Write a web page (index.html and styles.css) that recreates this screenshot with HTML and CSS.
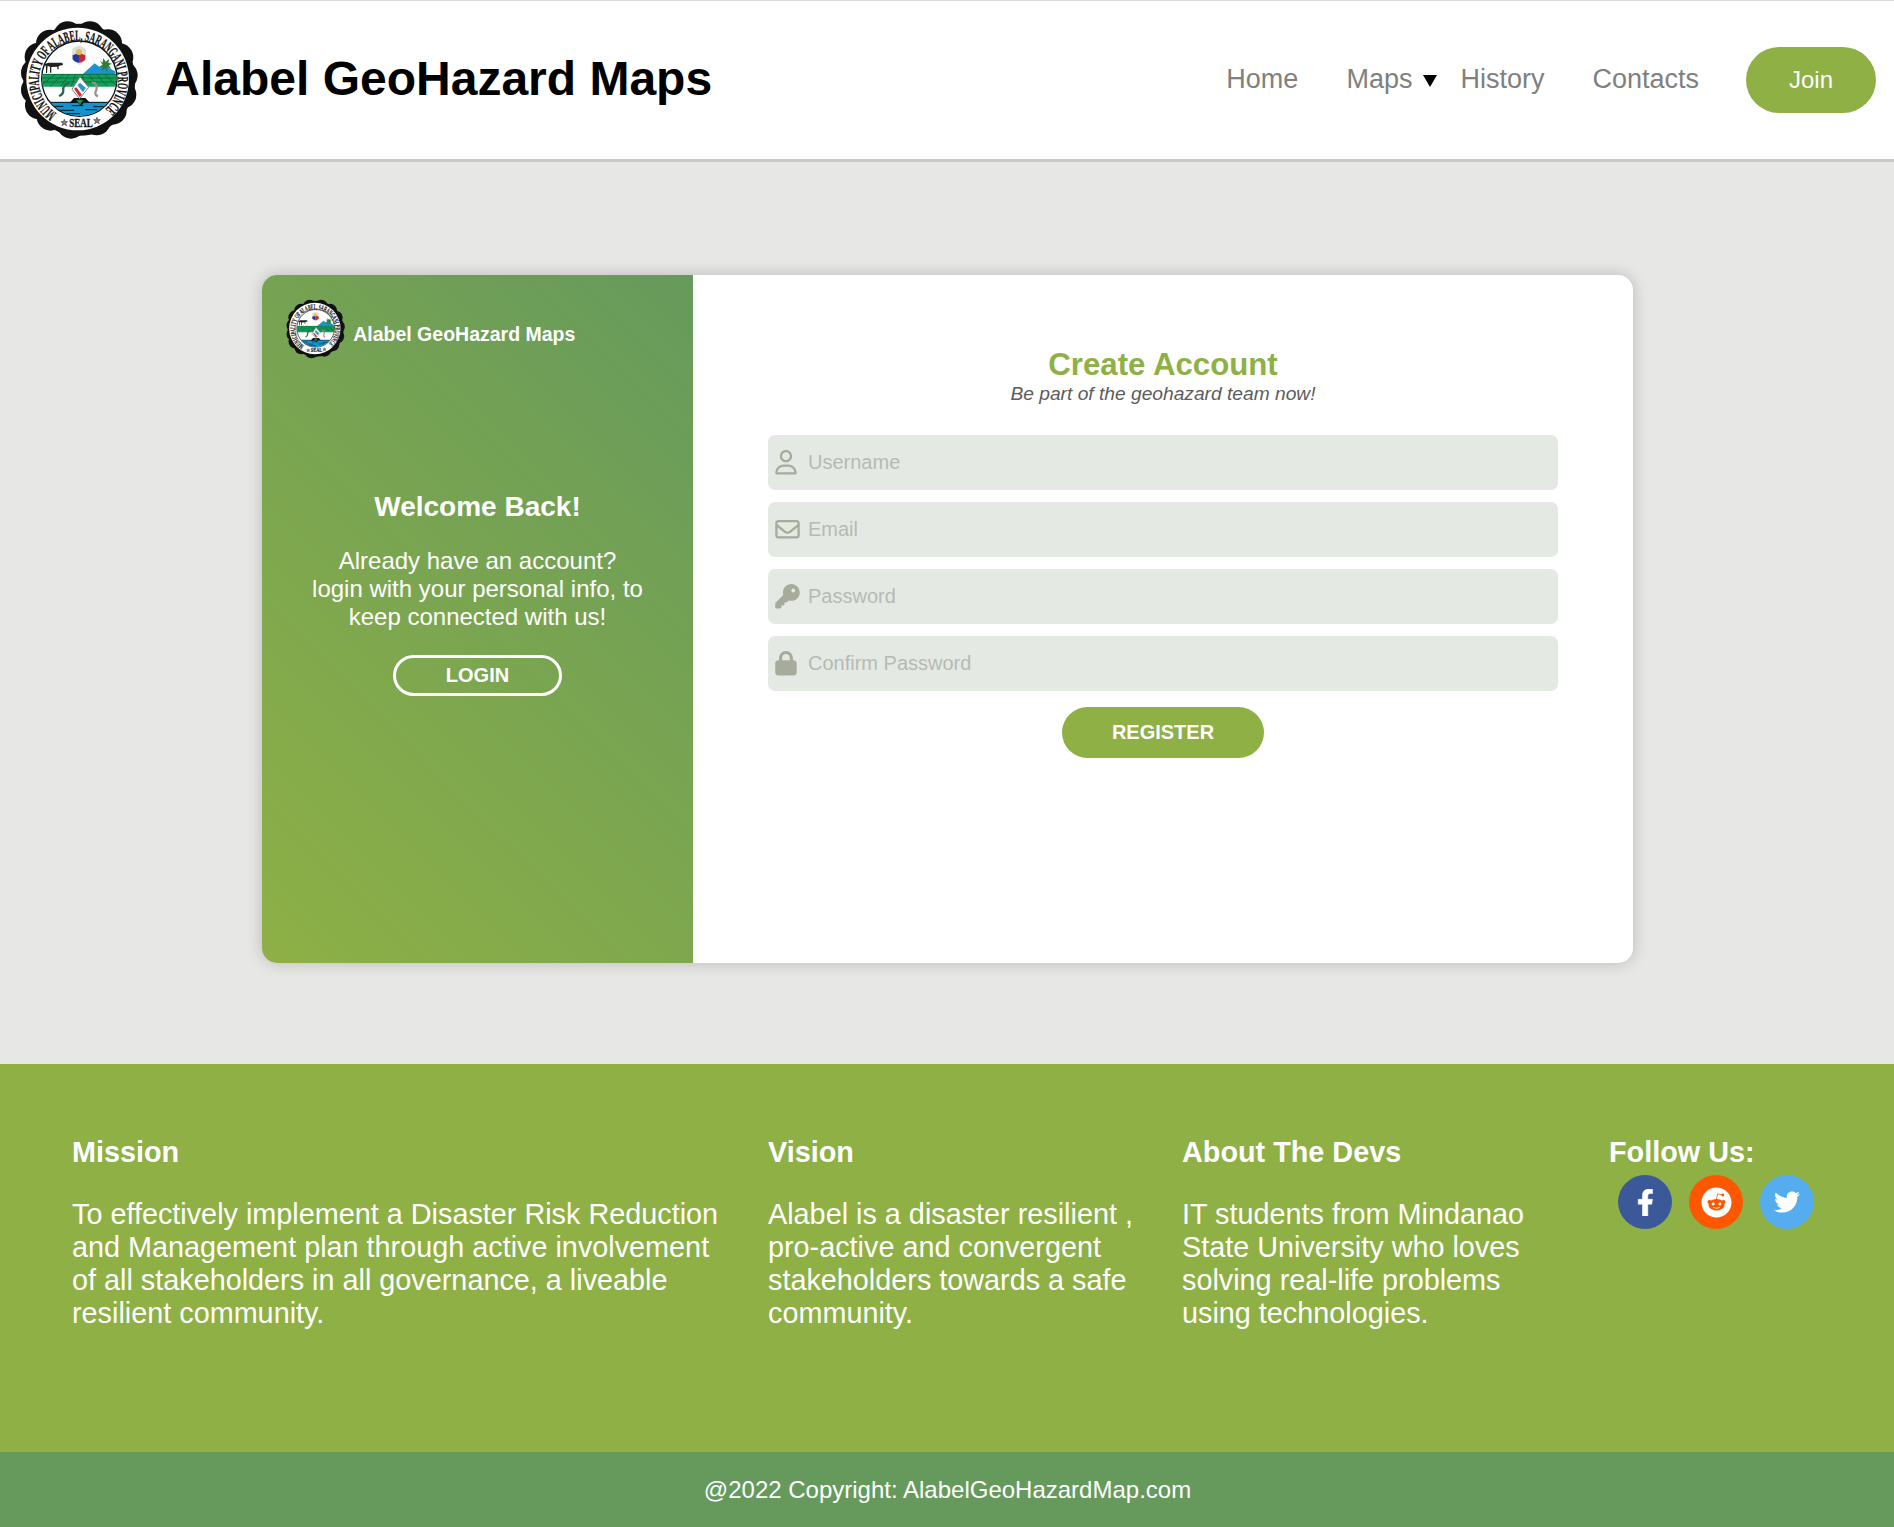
FILE: index.html
```html
<!DOCTYPE html>
<html lang="en">
<head>
<meta charset="utf-8">
<title>Alabel GeoHazard Maps</title>
<link rel="stylesheet" href="styles.css">
</head>
<body>
<svg class="sprite" aria-hidden="true">
  <defs>
    <path id="ring" d="M170 342A119 119 0 1 1 315 331"/>
    <clipPath id="scene"><circle cx="238" cy="238" r="112"/></clipPath>
    <symbol id="seal" viewBox="60 62 358 360">
      <g fill="#111">
        <circle cx="238" cy="241" r="168"/>
        <g id="lobes">
          <circle cx="270" cy="108" r="42"/><circle cx="324" cy="132" r="42"/><circle cx="358" cy="174" r="42"/><circle cx="371" cy="228" r="42"/><circle cx="367" cy="286" r="42"/><circle cx="338" cy="334" r="42"/><circle cx="290" cy="366" r="42"/><circle cx="213" cy="376" r="42"/><circle cx="152" cy="352" r="42"/><circle cx="117" cy="318" r="42"/><circle cx="105" cy="272" r="42"/><circle cx="105" cy="220" r="42"/><circle cx="116" cy="172" r="42"/><circle cx="150" cy="133" r="42"/><circle cx="203" cy="108" r="42"/>
        </g>
      </g>
      <circle cx="233" cy="239" r="154" fill="#fff"/>
      <circle cx="238" cy="238" r="113" fill="#fff" stroke="#111" stroke-width="4"/>
      <g clip-path="url(#scene)">
        <path fill="#1b93d2" d="M246 226L284 192L298 202L310 196L345 216V226Z"/>
        <path fill="#2f7d3a" d="M300 184l8 6 2-14 7 11 11-8-3 11 11 3-10 5 8 10-12-4-1 16-6-14-9 10 2-12-10-2 10-5Z"/>
        <path fill="#12a05a" d="M120 224H356V262H120Z"/>
        <path stroke="#0a5b34" stroke-width="2" fill="none" d="M120 225H356M120 236H356M120 248H356M120 261L165 225M150 261L190 225M182 261L208 225M214 261L226 225M256 261L246 225M290 261L268 225M322 261L290 225M352 261L314 225"/>
        <path fill="#1593cf" d="M110 308H366V370H110Z"/>
        <path stroke="#111" stroke-width="3" fill="none" d="M130 309H350M148 321H190M215 319H250M280 322H322M175 333H222M256 331H292M192 343H240"/>
        <path fill="#111" d="M208 312L222 296H256L270 310L254 308L243 320L232 309Z"/>
        <path fill="#16934d" d="M229 301H250L240 316Z"/>
      </g>
      <path fill="#fff" stroke="#777" stroke-width="3" d="M240 232L266 264L239 298L216 270Z"/>
      <path fill="#d92b36" d="M222 268L229 264L246 286L239 293Z"/>
      <path fill="#279bd0" d="M232 258L240 250L258 266L249 279Z"/>
      <path fill="none" stroke="#34624b" stroke-width="7" d="M207 251Q187 258 190 272Q190 286 177 290"/>
      <path fill="none" stroke="#9a918d" stroke-width="7" d="M276 250Q294 250 289 272Q281 286 294 291"/>
      <path fill="#222" d="M134 194L146 190H187L189 197L176 200V210H172V202L154 203V220H150V203L143 199L141 221H138V203Z"/>
      <path fill="#ddd" d="M218 146L239 138L257 148L260 180L238 198L215 180Z"/>
      <path fill="#263a92" d="M218 168L237 160V190Q222 188 218 178Z"/>
      <path fill="#c52b36" d="M237 160L256 168V178Q254 187 237 190Z"/>
      <circle cx="237" cy="158" r="9" fill="#e8bd46"/>
      <g class="seal-text">
        <text class="seal-ring"><textPath href="#ring" textLength="590" lengthAdjust="spacingAndGlyphs">MUNICIPALITY OF ALABEL, SARANGANI PROVINCE</textPath></text>
        <text x="208" y="383" textLength="70" lengthAdjust="spacingAndGlyphs">SEAL</text>
      </g>
      <path id="star" fill="#8a7a80" stroke="#513e46" stroke-width="2" d="M193 360l3 7h7l-6 5 3 7-7-4-7 4 3-7-6-5h7Z"/>
      <use href="#star" x="98" y="-6"/>
    </symbol>
  </defs>
</svg>

<header class="header">
  <a class="brand"><svg class="brand-seal"><use href="#seal"/></svg><h1>Alabel GeoHazard Maps</h1></a>
  <nav class="nav">
    <a>Home</a>
    <a class="nav-maps">Maps<svg class="caret" viewBox="0 0 14 12"><path d="M0 0H14L7 12Z"/></svg></a>
    <a>History</a>
    <a class="nav-contacts">Contacts</a>
    <a class="join">Join</a>
  </nav>
</header>

<main class="main">
  <section class="card">
    <aside class="welcome">
      <div class="card-brand"><svg class="card-seal"><use href="#seal"/></svg><strong>Alabel GeoHazard Maps</strong></div>
      <h2>Welcome Back!</h2>
      <p>Already have an account?<br>login with your personal info, to<br>keep connected with us!</p>
      <a class="login">LOGIN</a>
    </aside>
    <form class="register">
      <h2>Create Account</h2>
      <p class="tagline">Be part of the geohazard team now!</p>
      <label class="field"><svg viewBox="0 0 512 512"><path d="M272 304h-96C78.8 304 0 382.8 0 480c0 17.67 14.33 32 32 32h384c17.67 0 32-14.33 32-32C448 382.8 369.2 304 272 304zM48.99 464C56.89 400.9 110.8 352 176 352h96c65.16 0 119.1 48.95 127 112H48.99zM224 256c70.69 0 128-57.31 128-128c0-70.69-57.31-128-128-128S96 57.31 96 128C96 198.7 153.3 256 224 256zM224 48c44.11 0 80 35.89 80 80c0 44.11-35.89 80-80 80S144 172.1 144 128C144 83.89 179.9 48 224 48z"/></svg><input type="text" placeholder="Username"></label>
      <label class="field"><svg viewBox="0 0 512 512"><path d="M64 112c-8.8 0-16 7.2-16 16v22.1L220.5 291.7c20.7 17 50.4 17 71.1 0L464 150.1V128c0-8.8-7.2-16-16-16H64zM48 212.2V384c0 8.8 7.2 16 16 16H448c8.8 0 16-7.2 16-16V212.2L322 328.8c-38.4 31.5-93.7 31.5-132 0L48 212.2zM0 128C0 92.7 28.7 64 64 64H448c35.3 0 64 28.7 64 64V384c0 35.3-28.7 64-64 64H64c-35.3 0-64-28.7-64-64V128z"/></svg><input type="email" placeholder="Email"></label>
      <label class="field"><svg viewBox="0 0 512 512"><path d="M336 352c97.2 0 176-78.8 176-176S433.2 0 336 0S160 78.8 160 176c0 18.7 2.9 36.8 8.3 53.7L7 391c-4.5 4.5-7 10.6-7 17v80c0 13.3 10.7 24 24 24h80c13.3 0 24-10.7 24-24V448h40c13.3 0 24-10.7 24-24V384h40c6.4 0 12.5-2.5 17-7l33.3-33.3c16.9 5.4 35 8.3 53.7 8.3zM376 96a40 40 0 1 1 0 80 40 40 0 1 1 0-80z"/></svg><input type="password" placeholder="Password"></label>
      <label class="field"><svg viewBox="0 0 512 512"><path d="M144 144v48H304V144c0-44.2-35.8-80-80-80s-80 35.8-80 80zM80 192V144C80 64.5 144.5 0 224 0s144 64.5 144 144v48h16c35.3 0 64 28.7 64 64V448c0 35.3-28.7 64-64 64H64c-35.3 0-64-28.7-64-64V256c0-35.3 28.7-64 64-64H80z"/></svg><input type="password" placeholder="Confirm Password"></label>
      <button class="submit" type="button">REGISTER</button>
    </form>
  </section>
</main>

<footer class="footer">
  <section>
    <h3>Mission</h3>
    <p>To effectively implement a Disaster Risk Reduction<br>and Management plan through active involvement<br>of all stakeholders in all governance, a liveable<br>resilient community.</p>
  </section>
  <section>
    <h3>Vision</h3>
    <p>Alabel is a disaster resilient ,<br>pro-active and convergent<br>stakeholders towards a safe<br>community.</p>
  </section>
  <section>
    <h3>About The Devs</h3>
    <p>IT students from Mindanao<br>State University who loves<br>solving real-life problems<br>using technologies.</p>
  </section>
  <section>
    <h3>Follow Us:</h3>
    <div class="social">
      <a class="facebook"><svg viewBox="0 0 320 512"><path d="M279.14 288l14.22-92.66h-88.91v-60.13c0-25.35 12.42-50.06 52.24-50.06h40.42V6.26S260.43 0 225.36 0c-73.22 0-121.08 44.38-121.08 124.72v70.62H22.89V288h81.39v224h100.17V288z"/></svg></a>
      <a class="reddit"><svg viewBox="0 0 512 512"><path d="M201.5 305.5c-13.8 0-24.9-11.1-24.9-24.6 0-13.8 11.1-24.9 24.9-24.9 13.6 0 24.6 11.1 24.6 24.9 0 13.6-11.1 24.6-24.6 24.6zM504 256c0 137-111 248-248 248S8 393 8 256 119 8 256 8s248 111 248 248zm-132.3-41.2c-9.4 0-17.7 3.9-23.8 10-22.4-15.5-52.6-25.5-86.1-26.6l17.4-78.3 55.4 12.5c0 13.6 11.1 24.6 24.6 24.6 13.8 0 24.9-11.3 24.9-24.9s-11.1-24.9-24.9-24.9c-9.7 0-18 5.8-22.1 13.8l-61.2-13.6c-3-.8-6.1 1.4-6.9 4.4l-19.1 86.4c-33.2 1.4-63.1 11.3-85.5 26.8-6.1-6.4-14.7-10.2-24.1-10.2-34.9 0-46.3 46.9-14.4 62.8-1.1 5-1.7 10.2-1.7 15.5 0 52.6 59.2 95.2 132 95.2 73.1 0 132.3-42.6 132.3-95.2 0-5.3-.6-10.8-1.9-15.8 31.3-16 19.8-62.5-14.9-62.5zM302.8 331c-18.2 18.2-76.1 17.9-93.6 0-2.2-2.2-6.1-2.2-8.3 0-2.5 2.5-2.5 6.4 0 8.6 22.8 22.8 87.3 22.8 110.2 0 2.5-2.2 2.5-6.1 0-8.6-2.2-2.2-6.1-2.2-8.3 0zm7.7-75c-13.6 0-24.6 11.1-24.6 24.9 0 13.6 11.1 24.6 24.6 24.6 13.8 0 24.9-11.1 24.9-24.6 0-13.8-11-24.9-24.9-24.9z"/></svg></a>
      <a class="twitter"><svg viewBox="0 0 512 512"><path d="M459.37 151.716c.325 4.548.325 9.097.325 13.645 0 138.72-105.583 298.558-298.558 298.558-59.452 0-114.68-17.219-161.137-47.106 8.447.974 16.568 1.299 25.34 1.299 49.055 0 94.213-16.568 130.274-44.832-46.132-.975-84.792-31.188-98.112-72.772 6.498.974 12.995 1.624 19.818 1.624 9.421 0 18.843-1.3 27.614-3.573-48.081-9.747-84.143-51.98-84.143-102.985v-1.299c13.969 7.797 30.214 12.67 47.431 13.319-28.264-18.843-46.781-51.005-46.781-87.391 0-19.492 5.197-37.36 14.294-52.954 51.655 63.675 129.3 105.258 216.365 109.807-1.624-7.797-2.599-15.918-2.599-24.04 0-57.828 46.782-104.934 104.934-104.934 30.213 0 57.502 12.67 76.67 33.137 23.715-4.548 46.456-13.32 66.599-25.34-7.798 24.366-24.366 44.833-46.132 57.827 21.117-2.273 41.584-8.122 60.426-16.243-14.292 20.791-32.161 39.308-52.628 54.253z"/></svg></a>
    </div>
  </section>
</footer>
<div class="copyright">@2022 Copyright: AlabelGeoHazardMap.com</div>
</body>
</html>
```
FILE: styles.css
```css
* { box-sizing: border-box; }
body { margin: 0; background: #e7e7e5; font-family: Arial, "Liberation Sans", sans-serif; }
h1, h2, h3, p { margin: 0; }
.sprite { display: block; width: 0; height: 0; }
.seal-text { font: bold 36px "Liberation Serif", serif; fill: #111; stroke: #111; stroke-width: 1px; }
.seal-ring { font-size: 45px; }

.header {
  display: flex; align-items: center; justify-content: space-between;
  height: 162px; padding: 0 18px 0 20px;
  background: #fff; border-top: 1px solid #d9d9d9; border-bottom: 3px solid #c9c9c9;
}
.brand { display: flex; align-items: center; gap: 26px; }
.brand-seal { width: 119.3px; height: 120px; }
.brand h1 { font-size: 48px; line-height: 54px; margin-top: -2px; }
.nav { display: flex; align-items: center; font-size: 27px; line-height: 32px; color: #808080; }
.nav > a { margin: 0 48px 2px 0; }
.nav .nav-maps { display: flex; align-items: center; gap: 11px; margin-right: 23px; }
.caret { width: 14px; height: 12px; margin-top: 3px; fill: #000; }
.nav .nav-contacts { margin-right: 47px; }
.nav .join {
  width: 130px; height: 66px; margin: 0; border-radius: 33px;
  background: #8eb045; color: #fff; font-size: 24px; line-height: 66px; text-align: center;
}

.main { height: 902px; padding-top: 113px; }
.card {
  display: flex; width: 1371px; height: 688px; margin: 0 auto; overflow: hidden;
  border-radius: 15px; background: #fff; box-shadow: 0 0 16px rgba(0, 0, 0, .2);
}
.welcome {
  display: flex; flex-direction: column; align-items: center; width: 431px; padding-left: 1px;
  background: linear-gradient(45deg, #8eb045, #669a5c); color: #fff;
}
.card-brand { display: flex; align-items: center; align-self: flex-start; gap: 8px; margin: 24px 0 0 23px; height: 60px; font-size: 19.5px; }
.card-brand strong { margin-top: 11px; }
.card-seal { width: 59.7px; height: 60px; }
.welcome h2 { margin-top: 132px; font-size: 28px; line-height: 32px; }
.welcome p { margin-top: 24px; font-size: 24px; line-height: 28px; text-align: center; }
.login {
  width: 169px; height: 41px; margin-top: 24px; border: 3px solid #fff; border-radius: 21px;
  font-size: 20px; font-weight: bold; line-height: 34px; text-align: center;
}

.register { display: flex; flex: 1; flex-direction: column; align-items: center; padding: 72px 75px 0; }
.register h2 { padding-left: 1px; font-size: 31.2px; line-height: 36px; color: #8eb045; }
.tagline { margin-bottom: 30px; padding-left: 1px; font-size: 19.2px; font-style: italic; line-height: 22px; color: #5c5c5c; }
.field {
  display: flex; align-items: center; gap: 8.5px; width: 790px; height: 55px; margin-bottom: 12px; padding: 0 7px;
  border-radius: 7px; background: #e4eae3;
}
.field svg { width: 25px; height: 24.5px; fill: #a6ab9c; }
.field input { flex: 1; height: 30px; padding: 0; border: 0; outline: 0; background: none; font: 20px Arial, "Liberation Sans", sans-serif; }
.field input::placeholder { color: #b6bab5; opacity: 1; }
.submit {
  width: 202px; height: 51px; margin-top: 4px; padding: 0 0 0 1px; border: 0; border-radius: 26px;
  background: #8eb045; color: #fff; font: bold 20px Arial, "Liberation Sans", sans-serif;
}

.footer {
  display: grid; grid-template-columns: 696px 414px 427px auto; height: 388px; padding: 72px 0 0 72px;
  background: #8eb045; color: #fff; font-size: 28.8px; line-height: 33px;
}
.footer h3 { font-size: 28.8px; line-height: 33px; }
.footer p { margin-top: 29px; white-space: nowrap; }
.social { display: flex; gap: 17px; margin: 6px 0 0 9px; }
.social a { display: flex; align-items: center; justify-content: center; width: 54px; height: 54px; border-radius: 50%; }
.social svg { height: 27px; fill: #fff; }
.social .facebook svg { stroke: #fff; stroke-width: 10px; }
.facebook { background: #3b5998; }
.reddit { background: #ff5700; }
.social .reddit svg { height: 31px; }
.twitter { background: #55acee; }
.social .twitter svg { height: 26px; }

.copyright { height: 75px; padding-left: 1px; background: #669a5c; color: #fff; font-size: 24px; line-height: 75px; text-align: center; }
```
